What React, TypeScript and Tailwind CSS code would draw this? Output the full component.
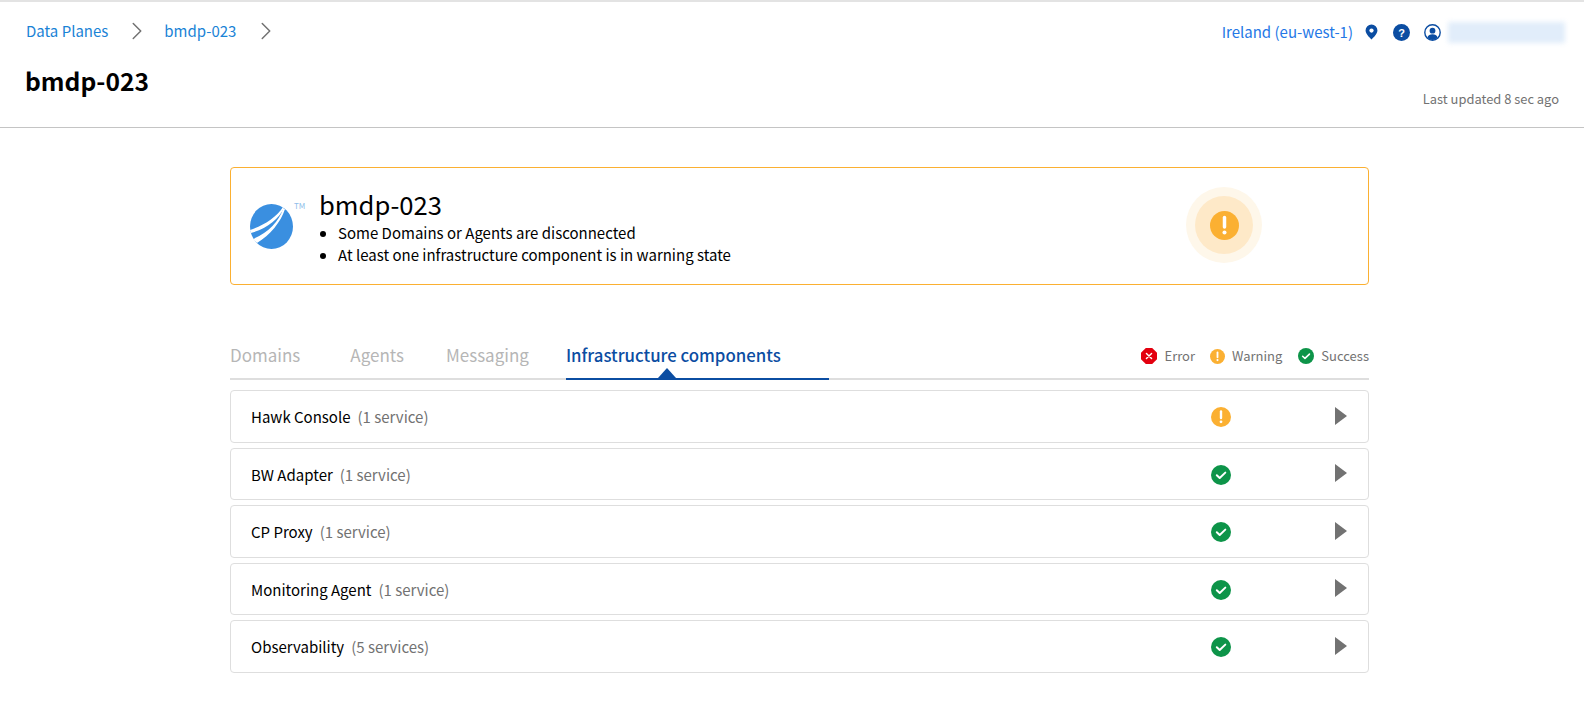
import { ChevronRight } from "lucide-react";

const font = "font-['Noto_Sans_CJK_JP','Source_Sans_Pro',sans-serif]";

const rows = [
  { name: "Hawk Console", count: "(1 service)", status: "warning" },
  { name: "BW Adapter", count: "(1 service)", status: "success" },
  { name: "CP Proxy", count: "(1 service)", status: "success" },
  { name: "Monitoring Agent", count: "(1 service)", status: "success" },
  { name: "Observability", count: "(5 services)", status: "success" },
];

const WarningIcon = ({ size = 20 }: { size?: number }) => (
  <svg width={size} height={size} viewBox="0 0 20 20">
    <circle cx="10" cy="10" r="10" fill="#fbb032" />
    <path d="M10 4.5v6.5" stroke="#fff" strokeWidth="2.4" strokeLinecap="round" />
    <circle cx="10" cy="14.8" r="1.4" fill="#fff" />
  </svg>
);

const SuccessIcon = ({ size = 20 }: { size?: number }) => (
  <svg width={size} height={size} viewBox="0 0 20 20">
    <circle cx="10" cy="10" r="10" fill="#0d9449" />
    <path d="M5.8 10.3l2.900 2.700 5.600-5.400" fill="none" stroke="#fff" strokeWidth="2" strokeLinecap="round" strokeLinejoin="round" />
  </svg>
);

const ErrorIcon = ({ size = 16 }: { size?: number }) => (
  <svg width={size} height={size} viewBox="0 0 20 20">
    <path d="M6 0h8l6 6v8l-6 6H6l-6-6V6z" fill="#e3000f" />
    <path d="M6.800 6.800l6.400 6.400M13.200 6.800l-6.400 6.400" stroke="#fff" strokeWidth="1.800" strokeLinecap="round" />
  </svg>
);

const Logo = () => (
  <svg width="43" height="45" viewBox="0 0 43 45">
    <ellipse cx="21.500" cy="22.500" rx="21.500" ry="22.500" fill="#3a8fe0" />
    <path d="M33 3C27 13 13 22 0 26l1 3C16 25 29 15 34 4z" fill="#fff" />
    <path d="M33 5C29 17 18 29 3 35l4 4C20 31 31 18 35 5z" fill="#fff" />
  </svg>
);

const App = () => {
  return (
    <div className={`${font} h-[710px] w-[1584px] overflow-hidden bg-white text-black`}>
      <header className="relative h-[128px] border-t-2 border-b border-t-[#e3e3e3] border-b-[#c4c4c4] px-[26px]">
        <div className="flex items-center pt-[14px] text-[15px] leading-[24px]">
          <span className="text-[#1a83d6]">Data Planes</span>
          <ChevronRight className="mr-[12px] ml-[14px] text-[#727272]" size={30} strokeWidth={1.2} />
          <span className="text-[#1a83d6]">bmdp-023</span>
          <ChevronRight className="ml-[15px] text-[#727272]" size={30} strokeWidth={1.2} />
        </div>
        <h1 className="mt-[16px] -ml-px text-[24.600px] leading-[36px] font-bold">bmdp-023</h1>
        <div className="absolute top-[17px] right-[19px] flex items-center">
          <span className="text-[15px] leading-[26px] text-[#2478e6]">Ireland (eu-west-1)</span>
          <svg className="mr-[15px] ml-[12px]" width="13" height="16" viewBox="0 0 14 16">
            <path d="M7 0a6.400 6.400 0 0 0-6.400 6.400C.6 10.600 7 16 7 16s6.400-5.400 6.400-9.600A6.400 6.400 0 0 0 7 0z" fill="#0b4da2" />
            <circle cx="7" cy="6.400" r="2.300" fill="#fff" />
          </svg>
          <svg className="mr-[14px]" width="17" height="17" viewBox="0 0 17 17">
            <circle cx="8.500" cy="8.500" r="8.500" fill="#0b4da2" />
            <text x="8.500" y="12.600" textAnchor="middle" fontSize="11" fontWeight="700" fill="#fff" fontFamily="Liberation Sans">?</text>
          </svg>
          <svg className="mr-[7px]" width="17" height="17" viewBox="0 0 17 17">
            <circle cx="8.500" cy="8.500" r="7.700" fill="none" stroke="#0b4da2" strokeWidth="1.400" />
            <circle cx="8.500" cy="6.700" r="2.900" fill="#0b4da2" />
            <path d="M3.300 13.600c.8-2.400 2.800-3.400 5.200-3.400s4.400 1 5.200 3.400a7 7 0 0 1-10.400 0z" fill="#0b4da2" />
          </svg>
          <div className="h-[21px] w-[117px] bg-[#e1edfa] blur-[2.5px]" />
        </div>
        <div className="absolute right-[25px] bottom-[18px] text-[12.900px] leading-[20px] text-[#727272]">Last updated 8 sec ago</div>
      </header>

      <main className="ml-[230px] w-[1139px] pt-[39px]">
        <section className="flex h-[118px] items-center rounded-[4px] border border-[#fbb032] pr-[106px] pl-[19px]">
          <div className="relative mr-[26px] h-[45px] w-[43px]">
            <Logo />
            <span className="absolute top-[-3px] left-[44px] text-[8px] leading-[10px] text-[#8fbdea]">TM</span>
          </div>
          <div className="flex-1">
            <h2 className="text-[25.600px] leading-[34px] font-normal">bmdp-023</h2>
            <ul className="mt-[1px] list-disc pl-[19px] text-[15px] leading-[22px]">
              <li>Some Domains or Agents are disconnected</li>
              <li>At least one infrastructure component is in warning state</li>
            </ul>
          </div>
          <div className="mb-[2px] flex h-[76px] w-[76px] items-center justify-center rounded-full bg-[#fef7ea]">
            <div className="flex h-[58px] w-[58px] items-center justify-center rounded-full bg-[#fee9c8]">
              <WarningIcon size={29} />
            </div>
          </div>
        </section>

        <div className="mt-[52px] flex h-[43px] items-center justify-between border-b-2 border-[#dedede]">
          <nav className="flex h-full items-start text-[17px] leading-[36px] text-[#b6b6b6]">
            <span className="mr-[50px]">Domains</span>
            <span className="mr-[42px]">Agents</span>
            <span className="mr-[37px]">Messaging</span>
            <span className="relative h-[43px] w-[263px] border-b-2 border-[#0b4da2] text-[16.800px] font-medium text-[#0b4da2]">
              Infrastructure components
              <span className="absolute bottom-0 left-[92px] h-0 w-0 border-x-[9px] border-b-[10px] border-x-transparent border-b-[#0b4da2]" />
            </span>
          </nav>
          <div className="flex items-center pb-[3px] text-[13px] leading-[20px] text-[#727272]">
            <ErrorIcon />
            <span className="mr-[15px] ml-[8px]">Error</span>
            <WarningIcon size={15} />
            <span className="mr-[16px] ml-[7px]">Warning</span>
            <SuccessIcon size={16} />
            <span className="ml-[7px]">Success</span>
          </div>
        </div>

        <div className="mt-[10px] flex flex-col gap-[5px]">
          {rows.map((row) => (
            <div key={row.name} className="flex h-[52.500px] items-center rounded-[4px] border border-[#dedede] pt-[2px] pr-[21px] pl-[20px]">
              <span className="text-[15px] leading-[24px]">{row.name}</span>
              <span className="ml-[7px] flex-1 text-[15px] leading-[24px] text-[#727272]">{row.count}</span>
              {row.status === "warning" ? <WarningIcon /> : <SuccessIcon />}
              <svg className="mb-[3px] ml-[104px]" width="12" height="18" viewBox="0 0 12 18">
                <path d="M0 0l12 9-12 9z" fill="#727272" />
              </svg>
            </div>
          ))}
        </div>
      </main>
    </div>
  );
};

export default App;
